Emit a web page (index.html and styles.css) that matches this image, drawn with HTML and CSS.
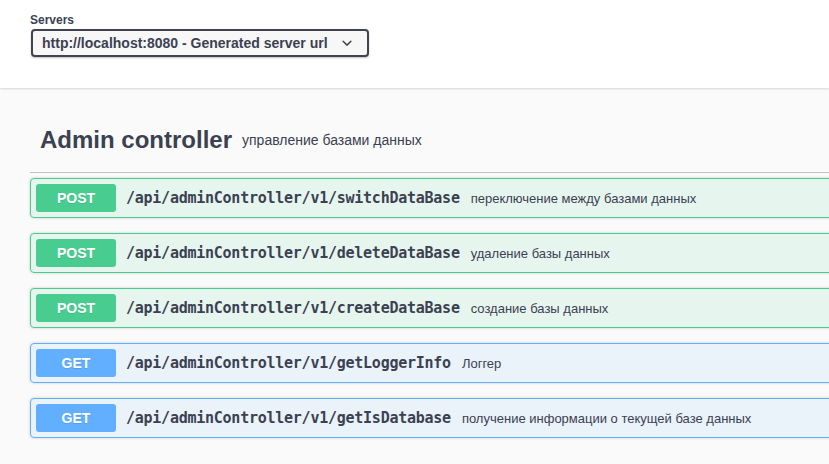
FILE: index.html
```html
<!DOCTYPE html>
<html lang="ru">
<head>
<meta charset="utf-8">
<title>Swagger UI</title>
<link rel="stylesheet" href="styles.css">
</head>
<body>
<section class="scheme-container">
  <div class="wrapper">
    <div class="servers">
      <span class="servers-title">Servers</span>
      <div class="select">
        <span class="select-text">http://localhost:8080 - Generated server url</span>
        <svg class="chevron" viewBox="0 0 20 20" width="20" height="20"><path d="M13.418 7.859a.695.695 0 0 1 .978 0 .68.68 0 0 1 0 .969l-3.908 3.83a.697.697 0 0 1-.979 0l-3.908-3.830a.68.68 0 0 1 0-.969.695.695 0 0 1 .978 0L10 11l3.418-3.141z" fill="#3b4151"/></svg>
      </div>
    </div>
  </div>
</section>
<main class="wrapper ops">
  <h3 class="opblock-tag">
    <span class="tag-name">Admin controller</span>
    <small class="tag-desc">управление базами данных</small>
  </h3>
  <div class="opblock post">
    <span class="method">POST</span>
    <span class="path">/api/adminController/v1/switchDataBase</span>
    <span class="desc">переключение между базами данных</span>
  </div>
  <div class="opblock post">
    <span class="method">POST</span>
    <span class="path">/api/adminController/v1/deleteDataBase</span>
    <span class="desc">удаление базы данных</span>
  </div>
  <div class="opblock post">
    <span class="method">POST</span>
    <span class="path">/api/adminController/v1/createDataBase</span>
    <span class="desc">создание базы данных</span>
  </div>
  <div class="opblock get">
    <span class="method">GET</span>
    <span class="path">/api/adminController/v1/getLoggerInfo</span>
    <span class="desc">Логгер</span>
  </div>
  <div class="opblock get">
    <span class="method">GET</span>
    <span class="path">/api/adminController/v1/getIsDatabase</span>
    <span class="desc">получение информации о текущей базе данных</span>
  </div>
</main>
</body>
</html>
```

FILE: styles.css
```css
html, body {
  margin: 0;
  padding: 0;
}
body {
  background: #fafafa;
  font-family: "Liberation Sans", Arial, sans-serif;
  color: #3b4151;
  overflow: hidden;
  width: 829px;
  height: 464px;
}
.wrapper {
  width: 1100px;
  padding: 0 30px;
  box-sizing: content-box;
}
.scheme-container {
  background: #fff;
  height: 88px;
  box-shadow: 0 1px 2px 0 rgba(0, 0, 0, 0.15);
  position: relative;
}
.servers {
  display: flex;
  flex-direction: column;
  align-items: flex-start;
  padding-top: 13px;
}
.servers-title {
  font-size: 12px;
  font-weight: 700;
  line-height: 14px;
  margin-bottom: 2px;
}
.select {
  display: flex;
  align-items: center;
  box-sizing: border-box;
  width: 338px;
  height: 28px;
  margin-left: 1px;
  padding: 0 10px 0 9px;
  border: 2px solid #41444e;
  border-radius: 4px;
  background: #f7f7f7;
  box-shadow: 0 1px 2px 0 rgba(0, 0, 0, 0.25);
}
.select-text {
  font-size: 14px;
  font-weight: 700;
  white-space: nowrap;
}
.chevron {
  margin-left: auto;
  flex: none;
}
.ops {
  padding-top: 19px;
}
.opblock-tag {
  display: flex;
  align-items: center;
  box-sizing: border-box;
  height: 66px;
  margin: 0 0 5px;
  padding: 0 20px 0 10px;
  border-bottom: 1px solid rgba(59, 65, 81, 0.3);
  font-size: 24px;
  font-weight: 700;
}
.tag-name {
  white-space: nowrap;
}
.tag-desc {
  font-size: 14px;
  font-weight: 400;
  padding: 0 10px;
}
.opblock {
  display: flex;
  align-items: center;
  box-sizing: border-box;
  height: 40px;
  margin: 0 0 15px;
  padding: 5px;
  border: 1px solid;
  border-radius: 4px;
  box-shadow: 0 0 3px rgba(0, 0, 0, 0.19);
}
.opblock.post {
  background: rgba(73, 204, 144, 0.1);
  border-color: #49cc90;
}
.opblock.get {
  background: rgba(97, 175, 254, 0.1);
  border-color: #61affe;
}
.method {
  flex: none;
  width: 80px;
  padding: 6px 0;
  line-height: 16px;
  border-radius: 3px;
  color: #fff;
  font-size: 14px;
  font-weight: 700;
  text-align: center;
  text-shadow: 0 1px 0 rgba(0, 0, 0, 0.1);
}
.post .method { background: #49cc90; }
.get .method { background: #61affe; }
.path {
  padding: 0 10px;
  font-family: "DejaVu Sans Mono", "Liberation Mono", monospace;
  font-size: 15px;
  font-weight: 700;
  letter-spacing: -0.25px;
  white-space: nowrap;
}
.desc {
  padding-left: 1px;
  font-size: 13px;
  white-space: nowrap;
}
```
